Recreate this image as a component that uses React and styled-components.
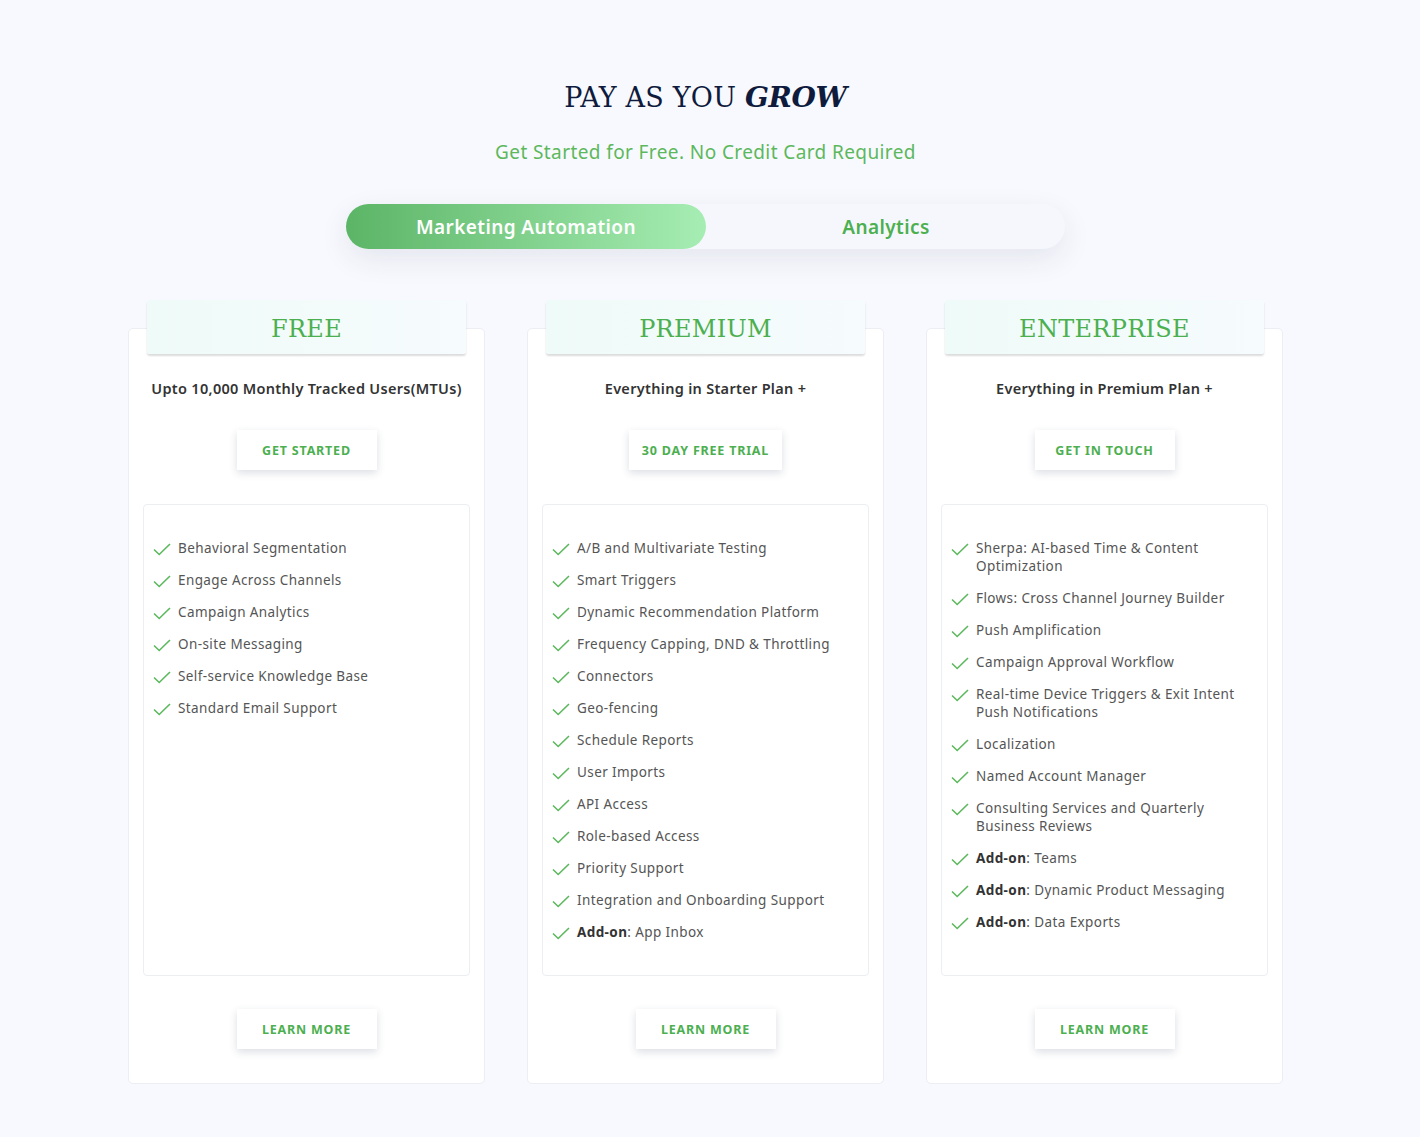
import React, { useState } from "react";
import styled, { createGlobalStyle } from "styled-components";

const GlobalStyle = createGlobalStyle`
  body {
    margin: 0;
    background: #f8f9fe;
    font-family: "Noto Sans", "Open Sans", sans-serif;
  }
`;

const plans = [
  {
    name: "FREE",
    summary: "Upto 10,000 Monthly Tracked Users(MTUs)",
    cta: "GET STARTED",
    features: [
      "Behavioral Segmentation",
      "Engage Across Channels",
      "Campaign Analytics",
      "On-site Messaging",
      "Self-service Knowledge Base",
      "Standard Email Support",
    ],
  },
  {
    name: "PREMIUM",
    summary: "Everything in Starter Plan +",
    cta: "30 DAY FREE TRIAL",
    features: [
      "A/B and Multivariate Testing",
      "Smart Triggers",
      "Dynamic Recommendation Platform",
      "Frequency Capping, DND & Throttling",
      "Connectors",
      "Geo-fencing",
      "Schedule Reports",
      "User Imports",
      "API Access",
      "Role-based Access",
      "Priority Support",
      "Integration and Onboarding Support",
      { addon: "App Inbox" },
    ],
  },
  {
    name: "ENTERPRISE",
    summary: "Everything in Premium Plan +",
    cta: "GET IN TOUCH",
    features: [
      "Sherpa: AI-based Time & Content Optimization",
      "Flows: Cross Channel Journey Builder",
      "Push Amplification",
      "Campaign Approval Workflow",
      "Real-time Device Triggers & Exit Intent Push Notifications",
      "Localization",
      "Named Account Manager",
      "Consulting Services and Quarterly Business Reviews",
      { addon: "Teams" },
      { addon: "Dynamic Product Messaging" },
      { addon: "Data Exports" },
    ],
  },
];

const Check = () => (
  <svg width="18" height="13" viewBox="0 0 18 13" fill="none">
    <path d="M1 6.5 L6.2 11.5 L17 1" stroke="#5cb85c" strokeWidth="1.6" />
  </svg>
);

const App = () => {
  const [tab, setTab] = useState("marketing");

  return (
    <Page>
      <GlobalStyle />
      <Title>
        PAY AS YOU <em>GROW</em>
      </Title>
      <Subtitle>Get Started for Free. No Credit Card Required</Subtitle>
      <Toggle>
        <ToggleButton $active={tab === "marketing"} onClick={() => setTab("marketing")}>
          Marketing Automation
        </ToggleButton>
        <ToggleButton $active={tab === "analytics"} onClick={() => setTab("analytics")}>
          Analytics
        </ToggleButton>
      </Toggle>
      <Grid>
        {plans.map((plan) => (
          <Card key={plan.name}>
            <PlanTab>{plan.name}</PlanTab>
            <Summary>{plan.summary}</Summary>
            <Action $top={32}>{plan.cta}</Action>
            <FeatureBox>
              {plan.features.map((f, i) => (
                <Feature key={i}>
                  <Check />
                  {typeof f === "string" ? (
                    <span>{f}</span>
                  ) : (
                    <span>
                      <b>Add-on</b>: {f.addon}
                    </span>
                  )}
                </Feature>
              ))}
            </FeatureBox>
            <Action $top={0}>LEARN MORE</Action>
          </Card>
        ))}
      </Grid>
    </Page>
  );
};

const Page = styled.div`
  padding: 78px 9px 52px 0;
  display: flex;
  flex-direction: column;
  align-items: center;
`;

const Title = styled.h1`
  margin: 0;
  font-family: "DejaVu Serif", "Liberation Serif", serif;
  font-weight: 400;
  font-size: 27px;
  line-height: 40px;
  color: #0f1b3d;
  letter-spacing: 0.2px;

  em {
    font-weight: 700;
    font-style: italic;
    font-size: 28px;
    letter-spacing: -0.3px;
  }
`;

const Subtitle = styled.p`
  margin: 22px 0 0;
  font-size: 19px;
  line-height: 24px;
  color: #5cb85c;
  font-weight: 400;
  letter-spacing: 0.4px;
`;

const Toggle = styled.div`
  margin-top: 40px;
  width: 719px;
  height: 45px;
  border-radius: 23px;
  background: #f6f7fd;
  display: flex;
  box-shadow: 0 10px 30px rgba(30, 40, 80, 0.09);
`;

const ToggleButton = styled.button`
  flex: 0 0 360px;
  border: none;
  border-radius: 23px;
  font-family: inherit;
  font-size: 19px;
  font-weight: 600;
  letter-spacing: 0.4px;
  cursor: pointer;
  color: ${(p) => (p.$active ? "#fff" : "#4caf50")};
  background: ${(p) =>
    p.$active ? "linear-gradient(90deg, #5cb567 0%, #a6edb3 100%)" : "transparent"};
`;

const Grid = styled.div`
  margin-top: 79px;
  display: grid;
  grid-template-columns: repeat(3, 357px);
  column-gap: 42px;
`;

const Card = styled.div`
  background: #fff;
  border: 1px solid #eceef4;
  border-radius: 5px;
  padding: 0 14px 34px;
  display: flex;
  flex-direction: column;
  align-items: center;
`;

const PlanTab = styled.div`
  align-self: stretch;
  margin: -29px 4px 0;
  height: 54px;
  padding-top: 3px;
  box-sizing: border-box;
  border-radius: 3px;
  background: linear-gradient(90deg, #effbf8 0%, #f6fbfd 100%);
  box-shadow: 0 2px 2px rgba(0, 0, 0, 0.14);
  display: flex;
  align-items: center;
  justify-content: center;
  font-family: "DejaVu Serif", "Liberation Serif", serif;
  font-size: 24px;
  color: #4caf50;
  letter-spacing: 0.3px;
`;

const Summary = styled.div`
  margin-top: 24px;
  font-size: 14.5px;
  line-height: 20px;
  font-weight: 600;
  color: #333;
  letter-spacing: 0.3px;
`;

const Action = styled.button`
  margin-top: ${(p) => p.$top}px;
  min-width: 140px;
  height: 40px;
  padding: 0 13px;
  border: none;
  background: #fff;
  box-shadow: 0 3px 8px rgba(40, 50, 90, 0.16);
  font-family: inherit;
  font-size: 12.5px;
  font-weight: 700;
  letter-spacing: 0.8px;
  color: #4caf50;
  cursor: pointer;
`;

const FeatureBox = styled.ul`
  align-self: stretch;
  flex: 1;
  list-style: none;
  margin: 34px 0 33px;
  padding: 34px 20px 34px 9px;
  border: 1px solid #eceef2;
  border-radius: 4px;
  display: flex;
  flex-direction: column;
  gap: 14px;
`;

const Feature = styled.li`
  display: flex;
  align-items: flex-start;
  gap: 7px;
  font-size: 13.5px;
  line-height: 18px;
  color: #555;
  letter-spacing: 0.4px;

  svg {
    flex-shrink: 0;
    margin-top: 4px;
  }

  b {
    font-weight: 700;
    color: #333;
  }
`;

export default App;
